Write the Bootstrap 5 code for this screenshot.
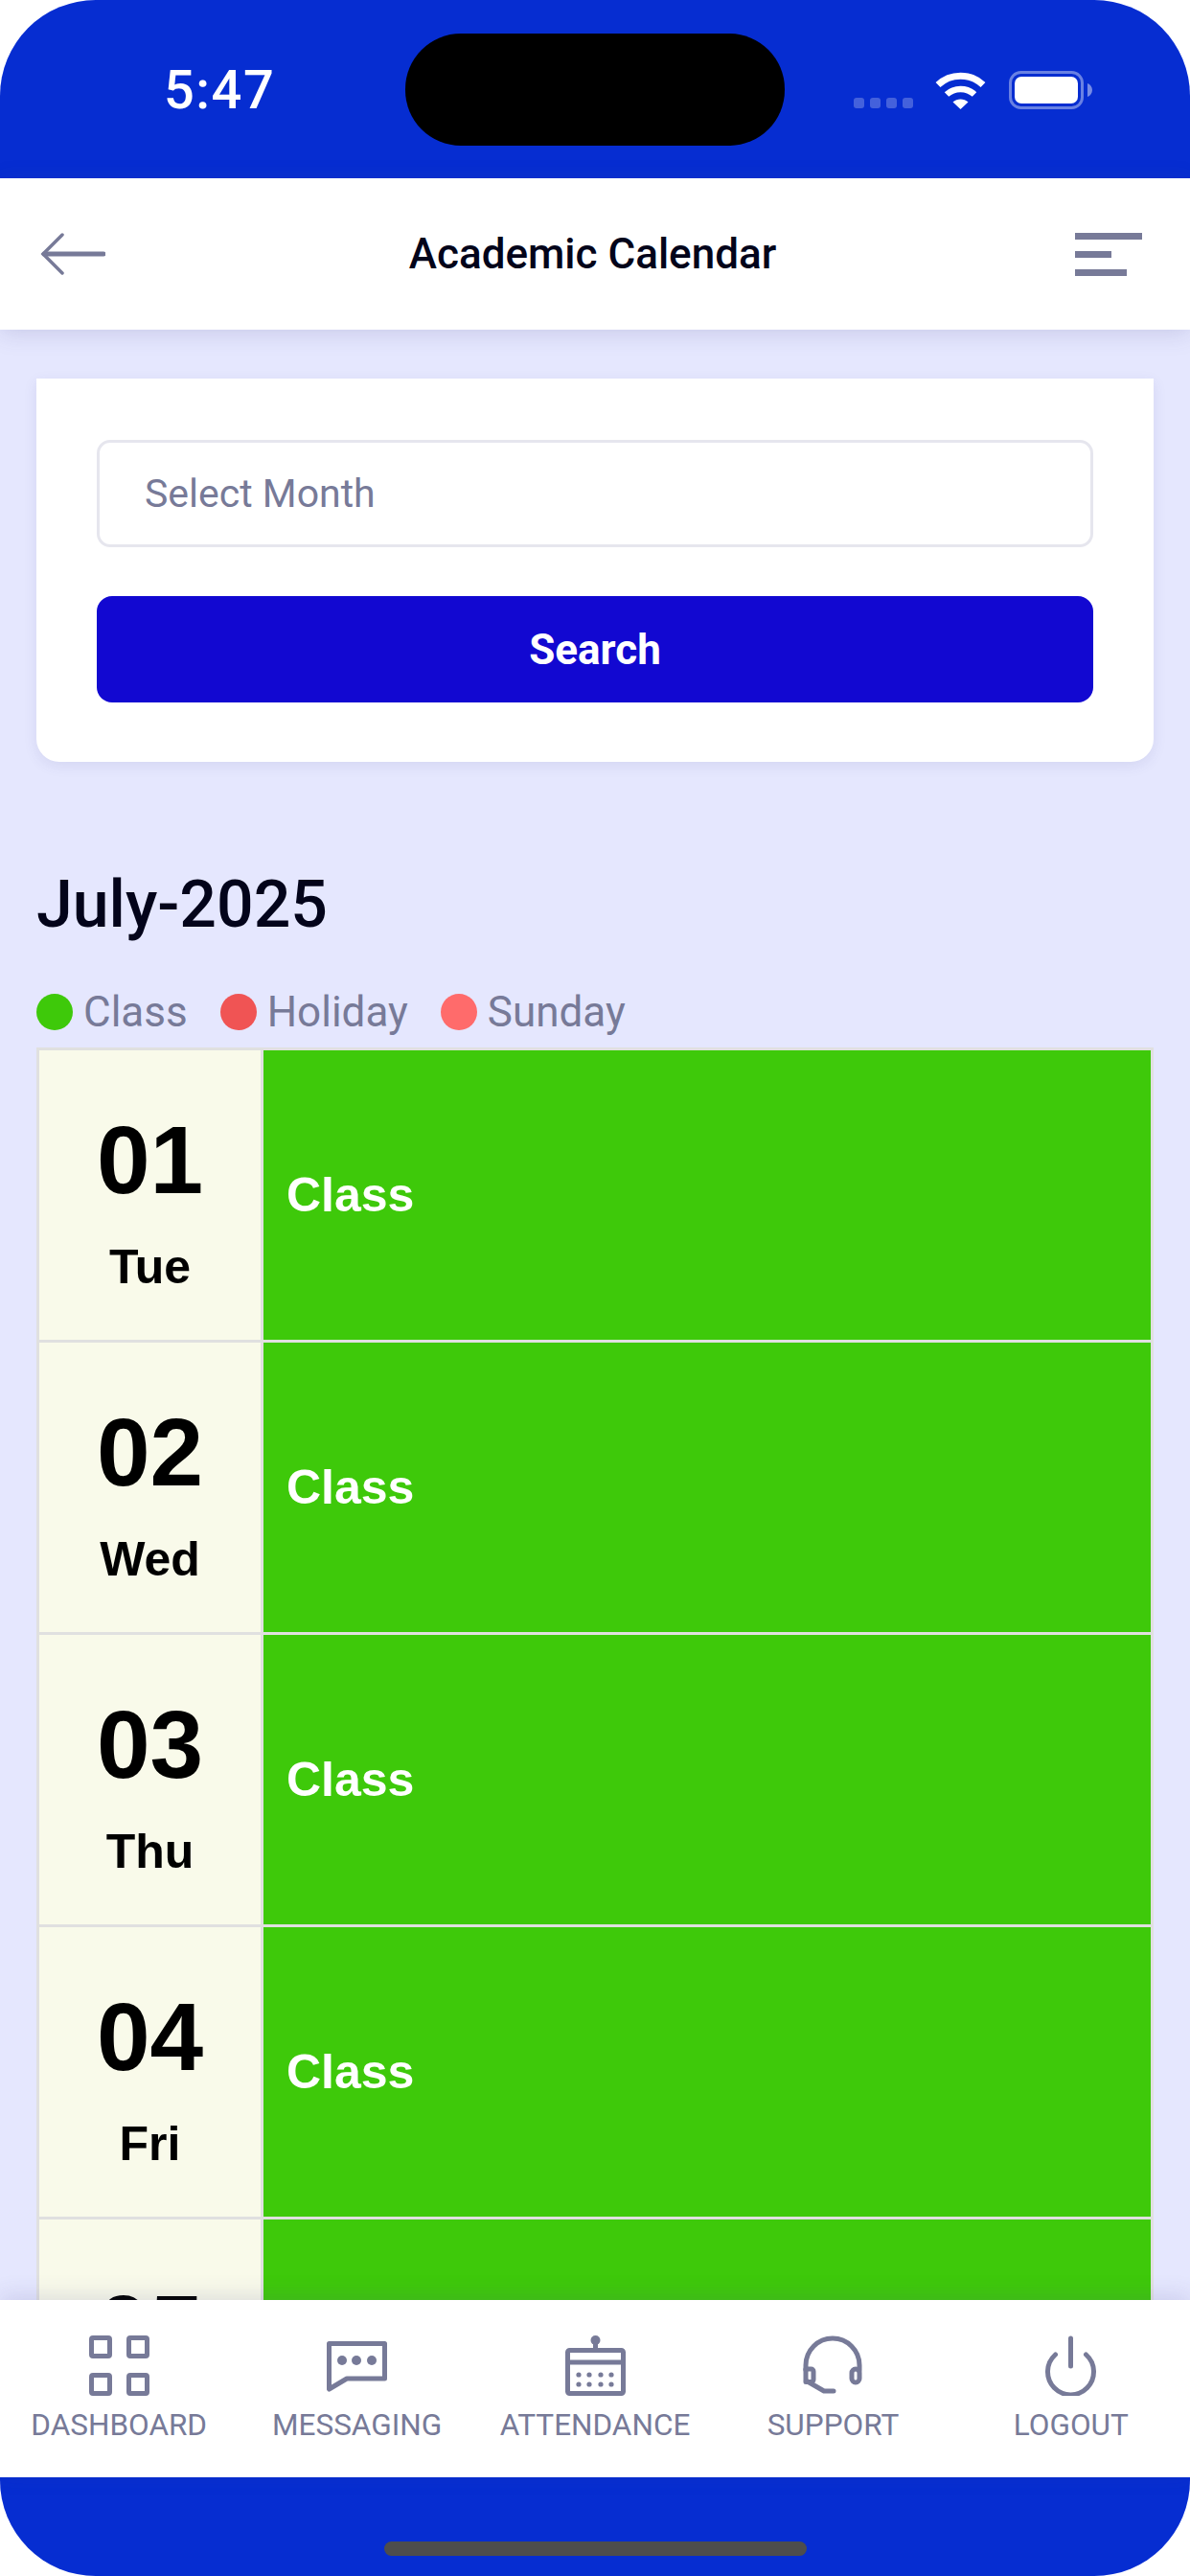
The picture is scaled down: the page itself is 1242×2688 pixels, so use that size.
<!DOCTYPE html>
<html lang="en">
<head>
  <meta charset="UTF-8" />
  <meta name="viewport" content="width=device-width, initial-scale=1.0"/>
  <title>Academic Calendar</title>
  <link href="https://cdn.jsdelivr.net/npm/bootstrap@5.3.0/dist/css/bootstrap.min.css" rel="stylesheet"/>
  <style>
    html, body { background: #fff; margin: 0; }
    .phone {
      width: 1242px;
      height: 2688px;
      border-radius: 100px;
      overflow: hidden;
      background: #e5e7fe;
      font-family: Roboto, sans-serif;
    }
    .status-bar {
      height: 186px;
      flex: 0 0 186px;
      background: #062dd1;
      padding-top: 35px;
      align-items: flex-start;
    }
    .status-row { height: 117px; width: 100%; }
    .status-time {
      width: 423px;
      padding-left: 171px;
      color: #fff;
      font-size: 56px;
      font-weight: 500;
      letter-spacing: 1.5px;
      line-height: 1;
    }
    .island { width: 396px; height: 117px; background: #000; border-radius: 58px; }
    .signal-dots { margin-left: 72px; margin-top: 27px; gap: 6px; }
    .signal-dots span { width: 11px; height: 11px; border-radius: 3px; background: rgba(255,255,255,.25); }
    .wifi-icon { margin-left: 23px; }
    .battery-icon { margin-left: 24px; }

    .top-bar {
      height: 158px;
      flex: 0 0 158px;
      background: #fff;
      padding: 0 50px 0 42px;
      box-shadow: 0 4px 22px rgba(70,70,140,.18);
      position: relative;
      z-index: 2;
    }
    .top-title { font-size: 44px; font-weight: 500; color: #03041a; margin: 0 0 0 5px; line-height: 1; }
    .menu-lines { width: 70px; gap: 12px; }
    .menu-lines span { height: 7px; background: #777a98; }
    .menu-lines span:nth-child(1) { width: 70px; }
    .menu-lines span:nth-child(2) { width: 38px; }
    .menu-lines span:nth-child(3) { width: 54px; }

    .page-body { padding: 51px 38px 0; overflow: hidden; min-height: 0; }
    .search-card {
      background: #fff;
      padding: 64px 63px 62px;
      border-radius: 0 0 24px 24px;
      box-shadow: 0 4px 14px rgba(70,70,140,.1);
    }
    .month-input.form-control {
      height: 112px;
      border: 3px solid #e6e6ee;
      border-radius: 14px;
      padding: 0 47px;
      font-size: 41px;
      color: #777a98;
    }
    .month-input.form-control::placeholder { color: #777a98; opacity: 1; }
    .search-btn.btn {
      height: 111px;
      margin-top: 51px;
      background: #1208d1;
      border: 0;
      border-radius: 16px;
      color: #fff;
      font-size: 44px;
      font-weight: 700;
    }
    .month-title { font-size: 68px; font-weight: 500; color: #03041a; line-height: 80px; margin: 109px 0 0; }
    .legend-row { margin-top: 42px; margin-bottom: 7px; height: 60px; }
    .legend-item { margin-right: 34px; gap: 11px; font-size: 44px; color: #777a98; line-height: 1; }
    .legend-dot { width: 38px; height: 38px; border-radius: 50%; }

    .cal-table { table-layout: fixed; border-collapse: collapse; width: 1166px; border: 3px solid #e0e0e0; }
    .cal-table > tbody > tr > td {
      height: 305px;
      padding: 0;
      border: 3px solid #e0e0e0;
      vertical-align: middle;
      font-family: "Liberation Sans", Arial, sans-serif;
      font-weight: 700;
    }
    .cal-table .date-col { width: 234px; }
    .cal-table > tbody > tr > td.date-cell { background: #f9faea; color: #000; text-align: center; }
    .cal-table > tbody > tr > td.class-cell {
      background: #3ec90a;
      color: #fff;
      font-size: 50px;
      padding-left: 24px;
    }
    .date-num { font-size: 100px; line-height: 1; margin-top: 12px; }
    .date-day { font-size: 50px; line-height: 1; margin-top: 37px; }

    .tab-bar {
      height: 185px;
      flex: 0 0 185px;
      background: #fff;
      padding-top: 37px;
      box-shadow: 0 -4px 22px rgba(70,70,140,.16);
      position: relative;
      z-index: 2;
    }
    .tab-item { flex: 1 0 0; color: #777a98; font-size: 31.5px; line-height: 1; text-align: center; }
    .tab-item svg { display: block; margin: 0 auto 15px; }
    .bottom-strip { height: 103px; flex: 0 0 103px; background: #062dd1; padding-top: 67px; }
    .home-bar { width: 441px; height: 15px; border-radius: 8px; background: #4d4d4d; }
  </style>
</head>
<body>
  <div class="phone d-flex flex-column">

    <!-- Status bar -->
    <div class="status-bar d-flex">
      <div class="status-row d-flex align-items-center">
        <div class="status-time">5:47</div>
        <div class="island"></div>
        <div class="signal-dots d-flex"><span></span><span></span><span></span><span></span></div>
        <svg class="wifi-icon" width="53" height="40" viewBox="0 0 53 40">
          <g fill="none" stroke="#fff">
            <path d="M3 14.5C16 2 37 2 50 14.5" stroke-width="7"/>
            <path d="M12 24.5C20 17 33 17 41 24.5" stroke-width="6.5"/>
          </g>
          <path d="M18.5 32.5C23 28.5 30 28.5 34.5 32.5L26.5 40Z" fill="#fff"/>
        </svg>
        <svg class="battery-icon" width="87" height="40" viewBox="0 0 87 40">
          <rect x="1.5" y="1.5" width="75" height="37" rx="11" fill="none" stroke="#fff" stroke-opacity=".4" stroke-width="3"/>
          <rect x="6" y="6" width="66" height="28" rx="7" fill="#fff"/>
          <path d="M82 13C85 14 87 17 87 20S85 26 82 27Z" fill="#fff" fill-opacity=".45"/>
        </svg>
      </div>
    </div>

    <!-- Header -->
    <div class="top-bar d-flex align-items-center justify-content-between">
      <svg width="68" height="46" viewBox="0 0 68 46">
        <path d="M66 23H4" fill="none" stroke="#777a98" stroke-width="5" stroke-linecap="round"/>
        <path d="M23 3L3 23L23 43" fill="none" stroke="#777a98" stroke-width="3.5" stroke-linecap="round"/>
      </svg>
      <h1 class="top-title">Academic Calendar</h1>
      <div class="menu-lines d-flex flex-column"><span></span><span></span><span></span></div>
    </div>

    <!-- Content -->
    <div class="page-body flex-grow-1">
      <div class="search-card">
        <input class="form-control month-input" type="text" placeholder="Select Month" aria-label="Select Month"/>
        <button class="btn search-btn w-100" type="button">Search</button>
      </div>

      <h2 class="month-title">July-2025</h2>

      <div class="legend-row d-flex align-items-center">
        <div class="legend-item d-flex align-items-center"><span class="legend-dot" style="background:#3ec90a"></span>Class</div>
        <div class="legend-item d-flex align-items-center"><span class="legend-dot" style="background:#f05454"></span>Holiday</div>
        <div class="legend-item d-flex align-items-center"><span class="legend-dot" style="background:#ff6b6b"></span>Sunday</div>
      </div>

      <table class="table mb-0 cal-table">
        <colgroup><col class="date-col"><col></colgroup>
        <tbody id="calBody"></tbody>
      </table>
    </div>

    <!-- Bottom tabs -->
    <div class="tab-bar d-flex">
      <div class="tab-item">
        <svg width="63" height="63" viewBox="0 0 63 63" fill="none" stroke="#777a98" stroke-width="5">
          <rect x="2.5" y="2.5" width="19" height="19" rx="1.5"/>
          <rect x="41.5" y="2.5" width="19" height="19" rx="1.5"/>
          <rect x="2.5" y="41.5" width="19" height="19" rx="1.5"/>
          <rect x="41.5" y="41.5" width="19" height="19" rx="1.5"/>
        </svg>
        DASHBOARD
      </div>
      <div class="tab-item">
        <svg width="63" height="63" viewBox="0 0 63 63">
          <path d="M2.5 8.5H60.5V45H21L2.5 56Z" fill="none" stroke="#777a98" stroke-width="5" stroke-linejoin="round"/>
          <circle cx="16" cy="26" r="5" fill="#777a98"/>
          <circle cx="31" cy="26" r="5" fill="#777a98"/>
          <circle cx="47" cy="26" r="5" fill="#777a98"/>
        </svg>
        MESSAGING
      </div>
      <div class="tab-item">
        <svg width="63" height="63" viewBox="0 0 63 63">
          <g fill="none" stroke="#777a98" stroke-width="5" stroke-linejoin="round">
            <rect x="2.5" y="15.5" width="58" height="45" rx="2"/>
            <path d="M2.5 28H60.5M31.5 5V15"/>
          </g>
          <circle cx="31.5" cy="5" r="5" fill="#777a98"/>
          <g fill="#777a98">
            <circle cx="14" cy="41" r="2.6"/><circle cx="25" cy="41" r="2.6"/><circle cx="37" cy="41" r="2.6"/><circle cx="48" cy="41" r="2.6"/>
            <circle cx="14" cy="51" r="2.6"/><circle cx="25" cy="51" r="2.6"/><circle cx="37" cy="51" r="2.6"/><circle cx="48" cy="51" r="2.6"/>
          </g>
        </svg>
        ATTENDANCE
      </div>
      <div class="tab-item">
        <svg width="63" height="63" viewBox="0 0 63 63" fill="none" stroke="#777a98" stroke-width="5" stroke-linecap="round" stroke-linejoin="round">
          <path d="M3 36V31A28 28 0 0 1 59 31V36"/>
          <rect x="51" y="35" width="8" height="14" rx="4"/>
          <path d="M3 35H8.5A2.500 2.500 0 0 1 11 37.500V46A2.500 2.500 0 0 1 8.500 48.500H3"/>
          <path d="M3 36V47L22 58H32"/>
        </svg>
        SUPPORT
      </div>
      <div class="tab-item">
        <svg width="63" height="63" viewBox="0 0 63 63" fill="none" stroke="#777a98" stroke-width="5" stroke-linecap="round">
          <path d="M15.500 20A24 24 0 1 0 47.500 20"/>
          <path d="M31.500 3V32"/>
        </svg>
        LOGOUT
      </div>
    </div>

    <div class="bottom-strip d-flex justify-content-center">
      <div class="home-bar"></div>
    </div>
  </div>

  <script src="https://cdn.jsdelivr.net/npm/bootstrap@5.3.0/dist/js/bootstrap.bundle.min.js"></script>
  <script>
    const days = [
      { date: "01", day: "Tue", type: "Class" },
      { date: "02", day: "Wed", type: "Class" },
      { date: "03", day: "Thu", type: "Class" },
      { date: "04", day: "Fri", type: "Class" },
      { date: "05", day: "Sat", type: "Class" }
    ];

    document.getElementById('calBody').innerHTML = days.map(d => `
      <tr>
        <td class="date-cell"><div class="date-num">${d.date}</div><div class="date-day">${d.day}</div></td>
        <td class="class-cell">${d.type}</td>
      </tr>
    `).join('');
  </script>
</body>
</html>
